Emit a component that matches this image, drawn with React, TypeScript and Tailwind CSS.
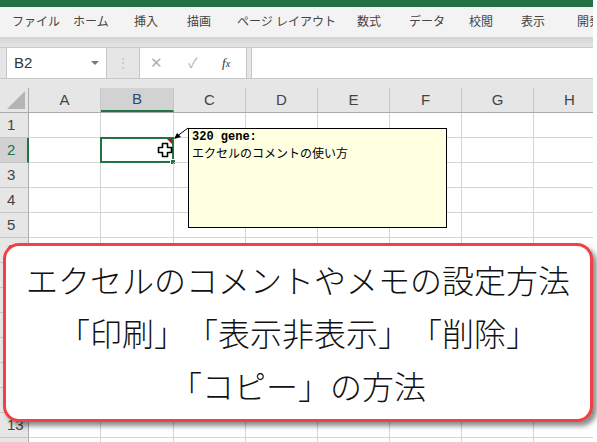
const tabs = [
  { label: "ファイル", w: "w-[61px]" },
  { label: "ホーム", w: "w-[61px]" },
  { label: "挿入", w: "w-[53px]" },
  { label: "描画", w: "w-[50px]" },
  { label: "ページ レイアウト", w: "w-[120px]" },
  { label: "数式", w: "w-[52px]" },
  { label: "データ", w: "w-[60px]" },
  { label: "校閲", w: "w-[52px]" },
  { label: "表示", w: "w-[56px]" },
  { label: "開発", w: "w-[50px]" },
];

const cols = [
  { name: "A", w: "w-[72px]" },
  { name: "B", w: "w-[73px]" },
  { name: "C", w: "w-[72px]" },
  { name: "D", w: "w-[72px]" },
  { name: "E", w: "w-[72px]" },
  { name: "F", w: "w-[72px]" },
  { name: "G", w: "w-[72px]" },
  { name: "H", w: "w-[72px]" },
];

const rows = Array.from({ length: 14 }, (_, i) => i + 1);

const ui = '"Liberation Sans", "Noto Sans CJK JP", sans-serif';

export default function App() {
  return (
    <div className="w-[597px] h-[442px] overflow-hidden bg-white relative">
      <div className="w-[593px] h-[442px] overflow-hidden flex flex-col" style={{ fontFamily: ui }}>
        {/* title strip */}
        <div className="h-[7px] shrink-0 bg-[#217346]" />

        {/* ribbon tabs */}
        <div className="h-[30px] shrink-0 bg-[#f3f3f3] flex items-center pl-[12px] text-[12px] text-[#444]">
          {tabs.map((t) => (
            <span key={t.label} className={`${t.w} shrink-0 whitespace-nowrap`}>
              {t.label}
            </span>
          ))}
        </div>

        {/* formula bar */}
        <div className="h-[51px] shrink-0 bg-[#e6e6e6] flex flex-col">
          <div className="h-[11px] bg-gradient-to-b from-[#d4d4d4] to-[#e6e6e6] border-b border-[#c8c8c8]" />
          <div className="h-[30px] flex items-stretch">
            <div className="ml-[6px] w-[101px] bg-white border-x border-[#c6c6c6] flex items-center justify-between pl-[7px] pr-[7px]">
              <span className="text-[15px] text-[#333]">B2</span>
              <span className="w-0 h-0 border-l-[4px] border-r-[4px] border-t-[4px] border-l-transparent border-r-transparent border-t-[#7a7a7a]" />
            </div>
            <div className="w-[32px] flex items-center justify-center text-[#c0c0c0] text-[12px] leading-none">⋮</div>
            <div className="w-[108px] bg-white border-x border-[#c6c6c6] flex items-center text-[#b0b0b0]">
              <span className="w-[34px] pl-[10px] text-[15px]">✕</span>
              <span className="w-[38px] pl-[14px] text-[14px]">✓</span>
              <span
                className="pl-[10px] text-[13px] italic text-[#333]"
                style={{ fontFamily: '"Liberation Serif", serif' }}
              >
                f<span className="text-[10px]">x</span>
              </span>
            </div>
            <div className="ml-[4px] flex-1 bg-white border-l border-[#c6c6c6]" />
          </div>
          <div className="flex-1 border-t border-[#c8c8c8]" />
        </div>

        {/* grid */}
        <div className="flex flex-col text-[#444]">
          <div className="flex h-[25px] bg-[#e6e6e6] border-b border-[#ababab]">
            <div className="w-[29px] shrink-0 border-r border-[#ababab] relative">
              <div className="absolute right-[3px] bottom-[3px] w-0 h-0 border-l-[18px] border-b-[18px] border-l-transparent border-b-[#b5b5b5]" />
            </div>
            {cols.map((c) => (
              <div
                key={c.name}
                className={`${c.w} shrink-0 flex items-center justify-center text-[15px] border-r border-[#c6c6c6] ${
                  c.name === "B" ? "bg-[#d2d2d2] border-b-2 border-b-[#217346] text-[#2b4a6b]" : ""
                }`}
              >
                {c.name}
              </div>
            ))}
          </div>
          {rows.map((r) => (
            <div key={r} className="flex h-[25px] shrink-0">
              <div
                className={`w-[29px] shrink-0 flex items-center pl-[7px] text-[15px] border-b border-[#c6c6c6] ${
                  r === 2
                    ? "bg-[#d2d2d2] border-r-2 border-r-[#217346] text-[#217346]"
                    : "bg-[#e6e6e6] border-r border-r-[#ababab]"
                }`}
              >
                {r}
              </div>
              {cols.map((c) => (
                <div key={c.name} className={`${c.w} shrink-0 border-r border-b border-[#d4d4d4] relative`}>
                  {r === 2 && c.name === "B" && (
                    <>
                      <div className="absolute -left-[1px] -top-[1px] -right-[1px] -bottom-[1px] border-2 border-[#217346]" />
                      <div className="absolute right-[1px] top-[1px] w-0 h-0 border-t-[5px] border-l-[5px] border-t-[#e00000] border-l-transparent" />
                      <div className="absolute -right-[3px] -bottom-[3px] w-[6px] h-[6px] bg-[#217346] border border-white" />
                      <svg className="absolute left-[56px] top-[4px]" width="16" height="16" viewBox="0 0 16 16">
                        <path
                          d="M5.5 1.5h5v4h4v5h-4v4h-5v-4h-4v-5h4z"
                          fill="white"
                          stroke="black"
                          strokeWidth="1.6"
                          strokeLinejoin="round"
                        />
                      </svg>
                    </>
                  )}
                </div>
              ))}
            </div>
          ))}
        </div>
      </div>

      {/* comment connector */}
      <svg className="absolute left-0 top-0" width="597" height="442">
        <line x1="176" y1="137" x2="188" y2="128" stroke="black" strokeWidth="1" />
        <path d="M174 139 L181 137 L177 133 Z" fill="black" />
      </svg>

      {/* comment box */}
      <div className="absolute left-[188px] top-[128px] w-[259px] h-[100px] bg-[#ffffe1] border border-black px-[3px] pt-[1px] text-black text-[12px] leading-[15px]">
        <div className="font-bold text-[12px]" style={{ fontFamily: '"Liberation Mono", monospace' }}>
          320 gene:
        </div>
        <div style={{ fontFamily: '"Noto Sans CJK JP", sans-serif' }}>エクセルのコメントの使い方</div>
      </div>

      {/* title callout */}
      <div
        className="absolute left-[3px] top-[243px] w-[590px] h-[179px] bg-white border-[3px] border-[#f04144] rounded-[16px] shadow-[4px_4px_5px_rgba(0,0,0,0.45)] flex flex-col items-center pt-[7px] text-[32px] leading-[53px] text-[#111] font-light [text-spacing-trim:space-all]"
        style={{ fontFamily: '"Noto Sans CJK JP", sans-serif' }}
      >
        <div>エクセルのコメントやメモの設定方法</div>
        <div>「印刷」「表示非表示」「削除」</div>
        <div>「コピー」の方法</div>
      </div>
    </div>
  );
}
